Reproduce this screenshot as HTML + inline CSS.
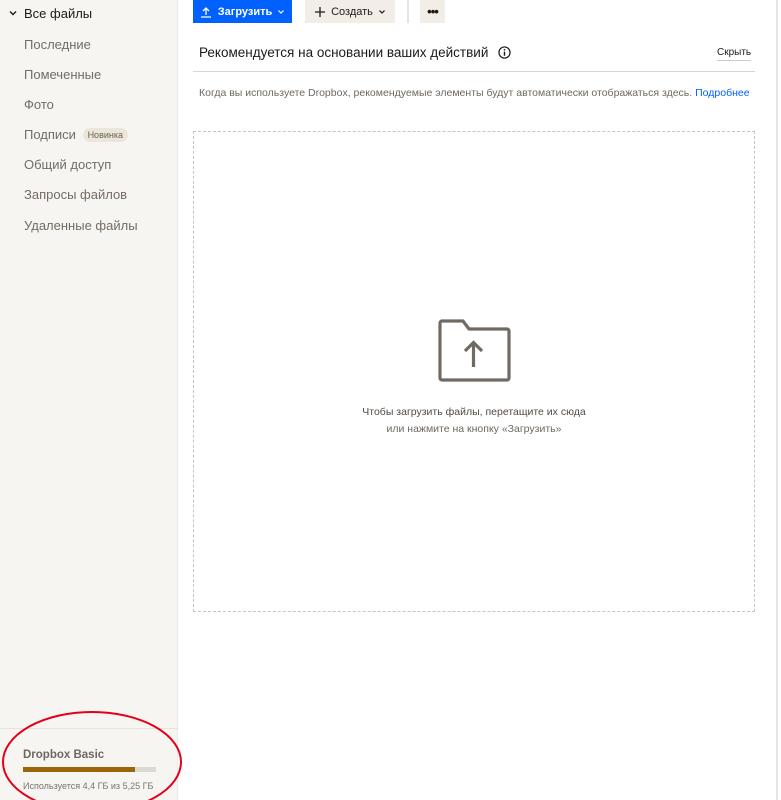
<!DOCTYPE html>
<html><head><meta charset="utf-8"><style>
*{margin:0;padding:0;box-sizing:border-box}
body{width:781px;height:800px;overflow:hidden;background:#fff;font-family:"Liberation Sans","DejaVu Sans",sans-serif;position:relative}
.side{position:absolute;left:0;top:0;width:178px;height:800px;background:#f7f5f2;border-right:1px solid #ece9e4}
.side .item{position:absolute;left:24px;font-size:13px;color:#736c64}
.side .all{left:24px;color:#1e1919}
.badge{display:inline-block;background:#ece5da;color:#6b6258;font-size:9px;padding:2px 5px;border-radius:7px;vertical-align:1px;margin-left:3px}
.foot{position:absolute;left:0;top:728px;width:178px;border-top:1px solid #e6e2dc;height:72px}
.btn{position:absolute;top:0;height:23px;font-size:11px;font-weight:bold;display:flex;align-items:center;justify-content:center}
.rline{position:absolute;left:776px;top:0;width:2px;height:800px;background:#e8e6e3}
</style></head><body>
<div class="side">
 <div class="item all" style="top:6px;left:8px">
  <svg width="10" height="10" viewBox="0 0 10 10" style="vertical-align:0px;margin-right:6px"><path d="M2 3.5 L5 6.5 L8 3.5" stroke="#1e1919" stroke-width="1.4" fill="none"/></svg>Все файлы</div>
 <div class="item" style="top:37px">Последние</div>
 <div class="item" style="top:67px">Помеченные</div>
 <div class="item" style="top:97px">Фото</div>
 <div class="item" style="top:127px">Подписи <span class="badge">Новинка</span></div>
 <div class="item" style="top:157px">Общий доступ</div>
 <div class="item" style="top:187px">Запросы файлов</div>
 <div class="item" style="top:218px">Удаленные файлы</div>
 <div class="foot">
  <div style="position:absolute;left:23px;top:20px;font-size:11.5px;font-weight:bold;color:#6f6861">Dropbox Basic</div>
  <div style="position:absolute;left:23px;top:38px;width:133px;height:5px;background:#dcd8d2"><div style="width:112px;height:5px;background:#9b6508"></div></div>
  <div style="position:absolute;left:23px;top:52px;font-size:9px;color:#7a736b">Используется 4,4 ГБ из 5,25 ГБ</div>
 </div>
</div>
<div class="btn" style="left:193px;width:99px;background:#0061fe;color:#fff">
 <svg width="12" height="12" viewBox="0 0 12 12" style="margin-right:6px"><path d="M6 9V2M3 5L6 2L9 5M1 11H11" stroke="#fff" stroke-width="1.3" fill="none"/></svg>Загрузить <svg width="8" height="8" viewBox="0 0 8 8" style="margin-left:5px"><path d="M1.5 2.5L4 5L6.5 2.5" stroke="#fff" stroke-width="1.2" fill="none"/></svg></div>
<div class="btn" style="left:305px;width:90px;background:#f2ede6;color:#1e1919;font-weight:normal">
 <svg width="12" height="12" viewBox="0 0 12 12" style="margin-right:5px"><path d="M6 1V11M1 6H11" stroke="#1e1919" stroke-width="1.3"/></svg>Создать <svg width="8" height="8" viewBox="0 0 8 8" style="margin-left:5px"><path d="M1.5 2.5L4 5L6.5 2.5" stroke="#1e1919" stroke-width="1.2" fill="none"/></svg></div>
<div style="position:absolute;left:407px;top:0;width:2px;height:23px;background:#e6e2dc"></div>
<div class="btn" style="left:420px;width:25px;background:#f2ede6;color:#1e1919;font-size:13px;letter-spacing:-1px">•••</div>
<div style="position:absolute;left:199px;top:45px;font-size:13.5px;color:#1e1919">Рекомендуется на основании ваших действий
 <svg width="13" height="13" viewBox="0 0 14 14" style="vertical-align:-2px;margin-left:6px"><circle cx="7" cy="7" r="6" stroke="#1e1919" stroke-width="1.3" fill="none"/><path d="M7 6V10.5" stroke="#1e1919" stroke-width="1.5"/><circle cx="7" cy="4" r="0.9" fill="#1e1919"/></svg></div>
<div style="position:absolute;left:717px;top:47px;font-size:10px;color:#1e1919;border-bottom:1px solid #ccc;padding-bottom:2px">Скрыть</div>
<div style="position:absolute;left:193px;top:71px;width:562px;height:1px;background:#d9d6d2"></div>
<div style="position:absolute;left:199px;top:87px;font-size:10.5px;color:#6f6861;white-space:nowrap">Когда вы используете Dropbox, рекомендуемые элементы будут автоматически отображаться здесь. <span style="color:#0061fe">Подробнее</span></div>
<div style="position:absolute;left:193px;top:131px;width:562px;height:481px;border:1.5px dashed #c8c4bf"></div>
<svg style="position:absolute;left:436px;top:318px" width="76" height="66" viewBox="0 0 76 66"><path d="M6 3H27L33 11H71a2 2 0 0 1 2 2V60a2 2 0 0 1-2 2H6a2 2 0 0 1-2-2V5a2 2 0 0 1 2-2Z" stroke="#716a63" stroke-width="3.2" fill="none" stroke-linejoin="round"/><path d="M37.5 49V25M29 33L37.5 24.5L46 33" stroke="#716a63" stroke-width="3.2" fill="none"/></svg>
<div style="position:absolute;left:193px;top:404px;width:562px;text-align:center;font-size:10.5px;line-height:17px;color:#524a44">Чтобы загрузить файлы, перетащите их сюда<br><span style="color:#6f6861">или нажмите на кнопку «Загрузить»</span></div>
<div class="rline"></div>
<svg style="position:absolute;left:0;top:700px" width="190" height="100"><ellipse cx="92" cy="62" rx="89" ry="50" stroke="#e2001a" stroke-width="2" fill="none"/></svg>
</body></html>
